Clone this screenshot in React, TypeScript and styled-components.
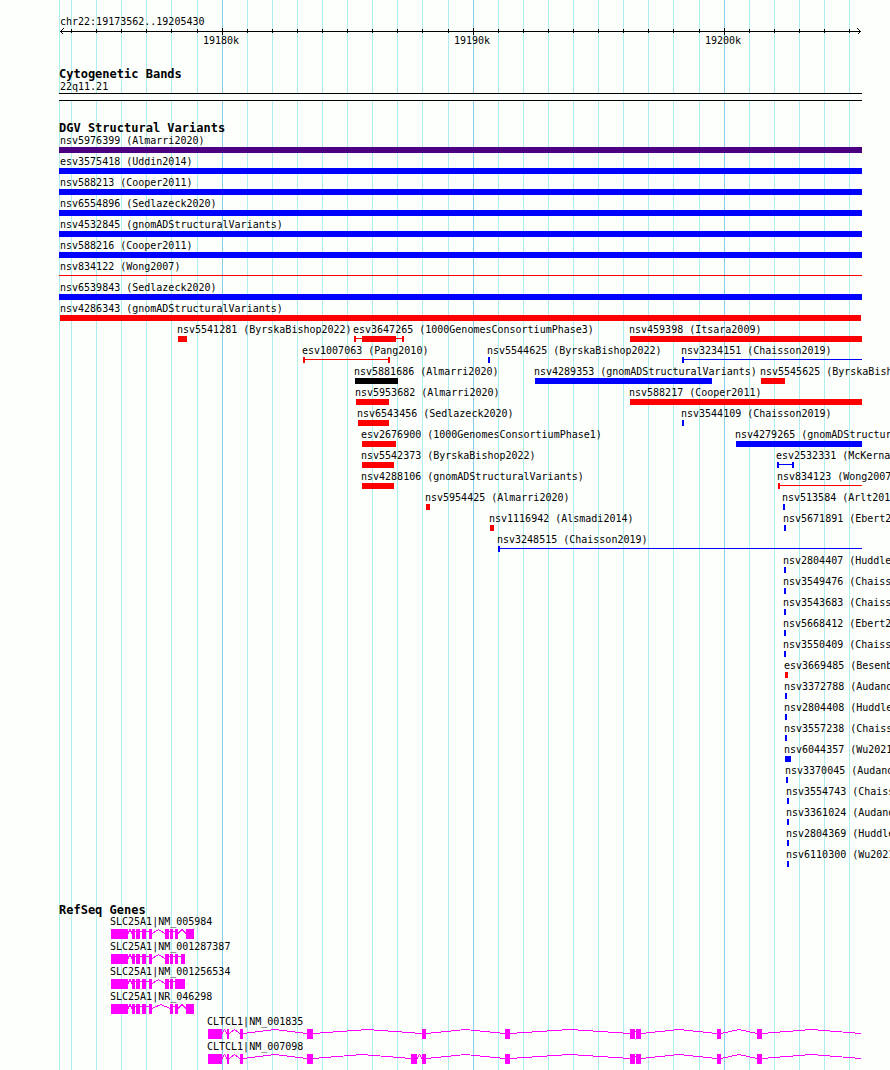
import React from "react";
import styled, { createGlobalStyle } from "styled-components";

const GlobalStyle = createGlobalStyle`
  body {
    margin: 0;
    background: #fdfffc;
    color: #000;
    font-family: "DejaVu Sans Mono", "Liberation Mono", monospace;
    font-size: 10px;
  }
`;

/* Horizontal scale: positions run from MAP_START to MAP_END across the panel. */
const MAP_START = 59;
const MAP_END = 862;
const SPAN = MAP_END - MAP_START;
const REGION = { from: 19173562, to: 19205430 };

const pct = (units: number) => `${(units / SPAN) * 100}%`;
const at = (x: number) => pct(x - MAP_START);

const ticks = Array.from({ length: 32 }, (_, i) => {
  const kb = 19174 + i;
  const share = (kb * 1000 - REGION.from) / (REGION.to - REGION.from);
  return { kb, x: Math.round(60 + share * 800), major: kb % 10 === 0 };
});

const Page = styled.main`
  position: relative;
  isolation: isolate;
  box-sizing: border-box;
  min-height: 100vh;
  padding: 15px 28px 4px 59px;
  overflow: hidden;
`;

const Layer = styled.div`
  display: grid;
  grid-template-columns: minmax(0, 1fr);
`;

const GridLayer = styled(Layer)`
  position: absolute;
  z-index: -1;
  inset: 0 28px 0 59px;
`;

const GridLine = styled.div<{ $major?: boolean }>`
  grid-area: 1 / 1;
  width: 1px;
  background: ${(p) => (p.$major ? "#87ceeb" : "#afeeee")};
`;

const Section = styled.section<{ $space?: number }>`
  margin-bottom: ${(p) => p.$space ?? 22}px;
`;

const Heading = styled.h2`
  margin: 0;
  font-size: 12px;
  line-height: 11px;
  font-weight: bold;
  white-space: nowrap;
`;

const Label = styled.div<{ $shift?: number }>`
  margin-left: ${(p) => p.$shift ?? 1}px;
  line-height: 13px;
  white-space: nowrap;
`;

const GeneLabel = styled(Label)`
  line-height: 11px;
  padding-bottom: 2px;
`;

const Axis = styled(Layer)`
  height: 7px;
`;

const AxisLine = styled.div`
  grid-area: 1 / 1;
  height: 1px;
  margin: 3px 1px;
  background: #000;
`;

const AxisTick = styled.div<{ $major: boolean }>`
  grid-area: 1 / 1;
  width: 1px;
  height: ${(p) => (p.$major ? 7 : 4)}px;
  margin-top: ${(p) => (p.$major ? 0 : 1)}px;
  background: #000;
`;

const ArrowHead = styled.svg<{ $end?: boolean }>`
  grid-area: 1 / 1;
  justify-self: ${(p) => (p.$end ? "end" : "start")};
  margin: 0 1px;
`;

const AxisLabel = styled.div`
  grid-area: 1 / 1;
  display: flex;
  justify-content: center;
  width: 0;
  line-height: 12px;
`;

const Band = styled.div`
  height: 6px;
  border: solid #000;
  border-width: 1px 0;
  background: #fdfffc;
`;

const Row = styled(Layer)`
  height: 21px;
`;

const FeatureBox = styled.div`
  grid-area: 1 / 1;
`;

const Glyph = styled(Layer)<{ $color: string }>`
  height: 6px;
  color: ${(p) => p.$color};
`;

const Bar = styled.div`
  grid-area: 1 / 1;
  background: currentColor;
`;

const Thread = styled.div`
  grid-area: 1 / 1;
  height: 1px;
  margin-top: 2px;
  background: currentColor;
`;

const Cap = styled.div<{ $end?: boolean }>`
  grid-area: 1 / 1;
  justify-self: ${(p) => (p.$end ? "end" : "start")};
  width: 2px;
  background: currentColor;
`;

const GeneRow = styled.div`
  height: 25px;
`;

const GeneShape = styled.svg`
  display: block;
  width: 100%;
  height: 10px;
`;

type Feature = {
  name: string;
  x: number;
  end: number;
  color: string;
  thread?: "none" | "left" | "both";
  core?: [number, number];
};

const BLUE = "#0000ff";
const RED = "#ff0000";

const f = (
  name: string,
  x: number,
  end: number,
  color: string,
  thread?: Feature["thread"],
  core?: Feature["core"]
): Feature => ({ name, x, end, color, thread, core });

const variantRows: Feature[][] = [
  [f("nsv5976399 (Almarri2020)", 59, 862, "#4b0082")],
  [f("esv3575418 (Uddin2014)", 59, 862, BLUE)],
  [f("nsv588213 (Cooper2011)", 59, 862, BLUE)],
  [f("nsv6554896 (Sedlazeck2020)", 59, 862, BLUE)],
  [f("nsv4532845 (gnomADStructuralVariants)", 59, 862, BLUE)],
  [f("nsv588216 (Cooper2011)", 59, 862, BLUE)],
  [f("nsv834122 (Wong2007)", 59, 862, RED, "none")],
  [f("nsv6539843 (Sedlazeck2020)", 59, 862, BLUE)],
  [f("nsv4286343 (gnomADStructuralVariants)", 60, 861, RED)],
  [
    f("nsv5541281 (ByrskaBishop2022)", 178, 187, RED),
    f("esv3647265 (1000GenomesConsortiumPhase3)", 354, 404, RED, "both", [362, 396]),
    f("nsv459398 (Itsara2009)", 630, 862, RED),
  ],
  [
    f("esv1007063 (Pang2010)", 303, 390, RED, "both"),
    f("nsv5544625 (ByrskaBishop2022)", 488, 490, BLUE),
    f("nsv3234151 (Chaisson2019)", 682, 862, BLUE, "left"),
  ],
  [
    f("nsv5881686 (Almarri2020)", 355, 398, "#000000"),
    f("nsv4289353 (gnomADStructuralVariants)", 535, 712, BLUE),
    f("nsv5545625 (ByrskaBishop2022)", 761, 785, RED),
  ],
  [
    f("nsv5953682 (Almarri2020)", 356, 389, RED),
    f("nsv588217 (Cooper2011)", 630, 862, RED),
  ],
  [
    f("nsv6543456 (Sedlazeck2020)", 358, 389, RED),
    f("nsv3544109 (Chaisson2019)", 682, 684, BLUE),
  ],
  [
    f("esv2676900 (1000GenomesConsortiumPhase1)", 362, 396, RED),
    f("nsv4279265 (gnomADStructuralVariants)", 736, 862, BLUE),
  ],
  [
    f("nsv5542373 (ByrskaBishop2022)", 362, 394, RED),
    f("esv2532331 (McKernan2009)", 777, 794, BLUE, "both"),
  ],
  [
    f("nsv4288106 (gnomADStructuralVariants)", 362, 394, RED),
    f("nsv834123 (Wong2007)", 778, 862, RED, "left"),
  ],
  [
    f("nsv5954425 (Almarri2020)", 426, 430, RED),
    f("nsv513584 (Arlt2011)", 783, 785, BLUE),
  ],
  [
    f("nsv1116942 (Alsmadi2014)", 490, 494, RED),
    f("nsv5671891 (Ebert2020)", 784, 786, BLUE),
  ],
  [f("nsv3248515 (Chaisson2019)", 498, 862, BLUE, "left")],
  [f("nsv2804407 (Huddleston2016)", 784, 786, BLUE)],
  [f("nsv3549476 (Chaisson2019)", 784, 786, BLUE)],
  [f("nsv3543683 (Chaisson2019)", 784, 786, BLUE)],
  [f("nsv5668412 (Ebert2020)", 784, 786, BLUE)],
  [f("nsv3550409 (Chaisson2019)", 784, 786, BLUE)],
  [f("esv3669485 (Besenbacher2016)", 785, 788, RED)],
  [f("nsv3372788 (Audano2019)", 785, 787, BLUE)],
  [f("nsv2804408 (Huddleston2016)", 785, 787, BLUE)],
  [f("nsv3557238 (Chaisson2019)", 785, 787, BLUE)],
  [f("nsv6044357 (Wu2021)", 785, 791, BLUE)],
  [f("nsv3370045 (Audano2019)", 786, 788, BLUE)],
  [f("nsv3554743 (Chaisson2019)", 787, 789, BLUE)],
  [f("nsv3361024 (Audano2019)", 787, 789, BLUE)],
  [f("nsv2804369 (Huddleston2016)", 787, 789, BLUE)],
  [f("nsv6110300 (Wu2021)", 787, 789, BLUE)],
];

type Exon = [number, number];

const slcHead: Exon[] = [[111, 128], [132, 135], [136, 140], [142, 146], [149, 152]];
const cltHead: Exon[] = [[208, 222], [227, 229], [240, 243], [307, 313]];
const cltTail: Exon[] = [
  [422, 426], [505, 510], [630, 635], [636, 641], [717, 721], [757, 762],
];

const genes: { name: string; exons: Exon[]; open?: boolean }[] = [
  { name: "SLC25A1|NM_005984", exons: [...slcHead, [165, 169], [170, 173], [175, 178], [186, 194]] },
  { name: "SLC25A1|NM_001287387", exons: [...slcHead, [165, 169], [170, 173], [175, 178], [181, 185]] },
  { name: "SLC25A1|NM_001256534", exons: [...slcHead, [165, 169], [170, 173], [175, 185]] },
  { name: "SLC25A1|NR_046298", exons: [...slcHead, [170, 173], [175, 178], [186, 194]] },
  { name: "CLTCL1|NM_001835", exons: [...cltHead, ...cltTail], open: true },
  { name: "CLTCL1|NM_007098", exons: [...cltHead, [411, 417], ...cltTail], open: true },
];

function VariantFeature({ feature }: { feature: Feature }) {
  const { name, x, end, color, thread, core } = feature;
  const width = end - x;
  return (
    <FeatureBox style={{ marginLeft: at(x), width: pct(width) }}>
      <Label $shift={x === MAP_START ? 1 : x === MAP_START + 1 ? 0 : -1}>{name}</Label>
      <Glyph $color={color}>
        {thread ? <Thread /> : <Bar />}
        {(thread === "left" || thread === "both") && <Cap />}
        {thread === "both" && <Cap $end />}
        {core && (
          <Bar
            style={{
              marginLeft: `${((core[0] - x) / width) * 100}%`,
              width: `${((core[1] - core[0]) / width) * 100}%`,
            }}
          />
        )}
      </Glyph>
    </FeatureBox>
  );
}

/* Introns are drawn as a low roof between two exons; the shortest ones are flat. */
function intronPath(from: number, to: number) {
  return to - from <= 3
    ? `M${from} 2.5H${to}`
    : `M${from} 4.5L${(from + to) / 2} 0.5L${to} 4.5`;
}

function Gene({ name, exons, open }: (typeof genes)[number]) {
  const stops = open ? [...exons, [861, 861] as Exon] : exons;
  const introns = stops
    .slice(1)
    .map((next, i) => intronPath(stops[i][1] - MAP_START, next[0] - MAP_START));
  return (
    <GeneRow>
      <GeneLabel $shift={-1} style={{ paddingLeft: at(exons[0][0]) }}>
        {name}
      </GeneLabel>
      <GeneShape
        viewBox={`0 0 ${SPAN} 10`}
        preserveAspectRatio="none"
        shapeRendering="crispEdges"
        aria-hidden="true"
      >
        <path
          d={introns.join("")}
          fill="none"
          stroke="#ff00ff"
          strokeWidth="1"
          vectorEffect="non-scaling-stroke"
        />
        {exons.map(([from, to]) => (
          <rect key={from} x={from - MAP_START} width={to - from} height="10" fill="#ff00ff" />
        ))}
      </GeneShape>
    </GeneRow>
  );
}

export default function App() {
  return (
    <>
      <GlobalStyle />
      <Page>
        <GridLayer aria-hidden="true">
          <GridLine />
          {ticks.map((t) => (
            <GridLine key={t.kb} $major={t.major} style={{ marginLeft: at(t.x) }} />
          ))}
        </GridLayer>

        <Section>
          <Label>chr22:19173562..19205430</Label>
          <Axis>
            <AxisLine />
            {ticks.map((t) => (
              <AxisTick key={t.kb} $major={t.major} style={{ marginLeft: at(t.x) }} />
            ))}
            <ArrowHead width="4" height="7" shapeRendering="crispEdges" aria-hidden="true">
              <path d="M3.5 0.5L0.5 3.5L3.5 6.5" fill="none" stroke="#000" />
            </ArrowHead>
            <ArrowHead $end width="4" height="7" shapeRendering="crispEdges" aria-hidden="true">
              <path d="M0.5 0.5L3.5 3.5L0.5 6.5" fill="none" stroke="#000" />
            </ArrowHead>
          </Axis>
          <Layer>
            {ticks
              .filter((t) => t.major)
              .map((t) => (
                <AxisLabel key={t.kb} style={{ marginLeft: at(t.x - 1) }}>
                  {t.kb}k
                </AxisLabel>
              ))}
          </Layer>
        </Section>

        <Section>
          <Heading>Cytogenetic Bands</Heading>
          <Label>22q11.21</Label>
          <Band />
        </Section>

        <Section $space={36}>
          <Heading>DGV Structural Variants</Heading>
          {variantRows.map((row) => (
            <Row key={row[0].name}>
              {row.map((feature) => (
                <VariantFeature key={feature.name} feature={feature} />
              ))}
            </Row>
          ))}
        </Section>

        <Section $space={0}>
          <Heading>RefSeq Genes</Heading>
          {genes.map((gene) => (
            <Gene key={gene.name} {...gene} />
          ))}
        </Section>
      </Page>
    </>
  );
}
